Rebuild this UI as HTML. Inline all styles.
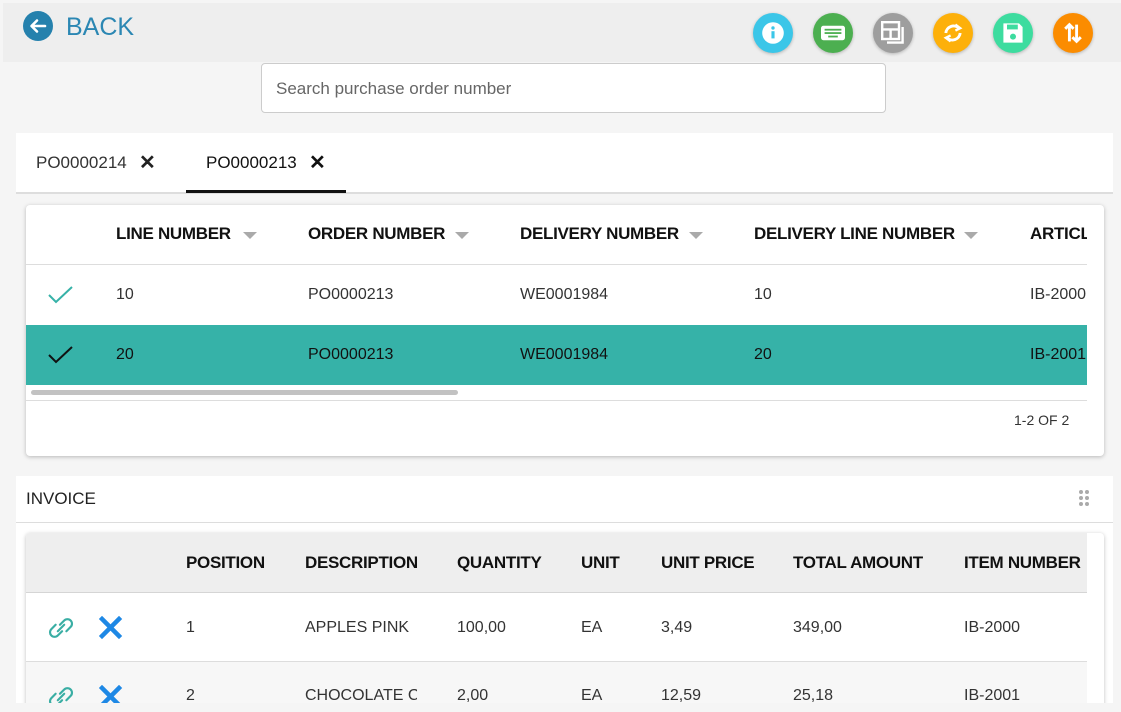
<!DOCTYPE html>
<html><head><meta charset="utf-8"><style>
*{margin:0;padding:0;box-sizing:border-box}
body{width:1121px;height:712px;overflow:hidden;background:#f5f5f5;font-family:"Liberation Sans",sans-serif;position:relative;color:#222}
.a{position:absolute;white-space:nowrap}
.hdr{left:3px;top:3px;width:1118px;height:59px;background:#eeeeee}
.ic{width:40px;height:40px;border-radius:50%;top:13px;box-shadow:0 1px 3px rgba(0,0,0,.25)}
.ic svg{position:absolute;left:8px;top:8px}
.th{font-weight:bold;font-size:17px;color:#111;letter-spacing:-0.3px}
.td{font-size:16px;color:#333}
.tri{display:inline-block;width:0;height:0;border-left:7px solid transparent;border-right:7px solid transparent;border-top:7px solid #aaa;position:absolute}
</style></head><body>
<div class="a hdr"></div>
<div class="a" style="left:23px;top:11px;width:30px;height:30px;border-radius:50%;background:#2581ad"></div>
<svg class="a" style="left:23px;top:11px" width="30" height="30" viewBox="0 0 30 30"><path d="M22 15H9M14 9.5L8.5 15 14 20.5" stroke="#fff" stroke-width="2.6" fill="none" stroke-linecap="round" stroke-linejoin="round"/></svg>
<div class="a" style="left:66px;top:13px;font-size:25px;color:#2b87b3">BACK</div>

<div class="a ic" style="left:753px;background:#3bc6e8"><svg width="24" height="24" viewBox="0 0 20 20"><circle cx="10" cy="10" r="9" fill="#fff"/><rect x="8.7" y="8.5" width="2.6" height="6" fill="#3bc6e8"/><circle cx="10" cy="5.8" r="1.4" fill="#3bc6e8"/></svg></div>
<div class="a ic" style="left:813px;background:#4caf50"><svg width="24" height="24" viewBox="0 0 20 20"><rect x="0" y="4" width="20" height="12" rx="2" fill="#fff"/><g fill="#4caf50"><rect x="3" y="6.5" width="14" height="1.5"/><rect x="3" y="9.3" width="14" height="1.5"/><rect x="6" y="12.2" width="8" height="1.5"/></g></svg></div>
<div class="a ic" style="left:873px;background:#9e9e9e"><svg width="24" height="24" viewBox="0 0 20 20" fill="none" stroke="#fff" stroke-width="2"><rect x="1" y="1" width="14" height="14"/><path d="M1 7h14M8 7v8M18 5v13H5"/></svg></div>
<div class="a ic" style="left:933px;background:#fdb00a"><svg width="24" height="24" viewBox="0 0 20 20" fill="none" stroke="#fff" stroke-width="2.4"><path d="M15 6A6.5 6.5 0 0 0 4 10M5 14a6.5 6.5 0 0 0 11-4"/><path d="M12 3l4 3-4 2M8 17l-4-3 4-2" stroke-width="2"/></svg></div>
<div class="a ic" style="left:993px;background:#3ddc9f"><svg width="24" height="24" viewBox="0 0 20 20"><path d="M2 2h13l3 3v13H2z" fill="#fff"/><rect x="5" y="3" width="9" height="4" fill="#3ddc9f"/><circle cx="10" cy="13" r="2.5" fill="#3ddc9f"/></svg></div>
<div class="a ic" style="left:1053px;background:#fb8c00"><svg width="24" height="24" viewBox="0 0 20 20" fill="none" stroke="#fff" stroke-width="2.4"><path d="M7 17V3M3.5 6.5L7 3l3.5 3.5M13 3v14M9.5 13.5L13 17l3.5-3.5"/></svg></div>

<div class="a" style="left:261px;top:63px;width:625px;height:50px;background:#fff;border:1px solid #ccc;border-radius:4px"></div>
<div class="a" style="left:276px;top:79px;font-size:17px;color:#666">Search purchase order number</div>

<div class="a" style="left:16px;top:133px;width:1097px;height:61px;background:#fff;border-bottom:2px solid #ddd"></div>
<div class="a" style="left:36px;top:153px;font-size:17px;color:#333">PO0000214</div>
<div class="a" style="left:139px;top:150px;font-size:20px;font-weight:bold;color:#222">✕</div>
<div class="a" style="left:206px;top:153px;font-size:17px;color:#111">PO0000213</div>
<div class="a" style="left:309px;top:150px;font-size:20px;font-weight:bold;color:#111">✕</div>
<div class="a" style="left:186px;top:190px;width:160px;height:3px;background:#111"></div>

<div class="a" style="left:26px;top:205px;width:1078px;height:251px;background:#fff;border-radius:4px;box-shadow:0 1px 4px rgba(0,0,0,.25);overflow:hidden">
  <div class="a" style="left:0;top:59px;width:1061px;height:1px;background:#ddd"></div>
  <div class="a" style="left:0;top:120px;width:1061px;height:60px;background:#36b2a8"></div>
  <div class="a" style="left:0;top:195px;width:1061px;height:1px;background:#ddd"></div>
  <div class="a" style="left:5px;top:185px;width:427px;height:5px;background:#c2c2c2;border-radius:3px"></div>
</div>
<div class="a th" style="left:116px;top:224px">LINE NUMBER</div><span class="tri" style="left:243px;top:232px"></span>
<div class="a th" style="left:308px;top:224px">ORDER NUMBER</div><span class="tri" style="left:455px;top:232px"></span>
<div class="a th" style="left:520px;top:224px">DELIVERY NUMBER</div><span class="tri" style="left:689px;top:232px"></span>
<div class="a th" style="left:754px;top:224px">DELIVERY LINE NUMBER</div><span class="tri" style="left:964px;top:232px"></span>
<div class="a th" style="left:1030px;top:224px;width:57px;overflow:hidden">ARTICLE</div>
<svg class="a" style="left:48px;top:285px" width="26" height="20" fill="none" stroke="#36b2a8" stroke-width="2"><path d="M1 10l7 7L24 2"/></svg>
<div class="a td" style="left:116px;top:286px">10</div>
<div class="a td" style="left:308px;top:286px">PO0000213</div>
<div class="a td" style="left:520px;top:286px">WE0001984</div>
<div class="a td" style="left:754px;top:286px">10</div>
<div class="a td" style="left:1030px;top:286px;width:57px;overflow:hidden">IB-2000</div>
<svg class="a" style="left:48px;top:345px" width="26" height="20" fill="none" stroke="#111" stroke-width="2"><path d="M1 10l7 7L24 2"/></svg>
<div class="a td" style="left:116px;top:346px;color:#111">20</div>
<div class="a td" style="left:308px;top:346px;color:#111">PO0000213</div>
<div class="a td" style="left:520px;top:346px;color:#111">WE0001984</div>
<div class="a td" style="left:754px;top:346px;color:#111">20</div>
<div class="a td" style="left:1030px;top:346px;width:57px;overflow:hidden;color:#111">IB-2001</div>
<div class="a" style="left:1014px;top:412px;font-size:14px;color:#333">1-2 OF 2</div>

<div class="a" style="left:16px;top:476px;width:1097px;height:236px;background:#fff"></div>
<div class="a" style="left:16px;top:522px;width:1097px;height:1px;background:#ddd"></div>
<div class="a" style="left:26px;top:489px;font-size:17px;color:#222">INVOICE</div>
<svg class="a" style="left:1078px;top:489px" width="12" height="18" fill="#aaa"><circle cx="3" cy="3" r="2"/><circle cx="9" cy="3" r="2"/><circle cx="3" cy="9" r="2"/><circle cx="9" cy="9" r="2"/><circle cx="3" cy="15" r="2"/><circle cx="9" cy="15" r="2"/></svg>

<div class="a" style="left:26px;top:533px;width:1078px;height:179px;background:#fff;border-radius:4px 4px 0 0;box-shadow:0 1px 4px rgba(0,0,0,.25);overflow:hidden">
  <div class="a" style="left:0;top:0;width:1061px;height:60px;background:#eeeeee;border-bottom:1px solid #d5d5d5"></div>
  <div class="a" style="left:0;top:128px;width:1061px;height:60px;background:#f7f7f7;border-top:1px solid #ddd"></div>
</div>
<div class="a th" style="left:186px;top:553px">POSITION</div>
<div class="a th" style="left:305px;top:553px">DESCRIPTION</div>
<div class="a th" style="left:457px;top:553px">QUANTITY</div>
<div class="a th" style="left:581px;top:553px">UNIT</div>
<div class="a th" style="left:661px;top:553px">UNIT PRICE</div>
<div class="a th" style="left:793px;top:553px">TOTAL AMOUNT</div>
<div class="a th" style="left:964px;top:553px">ITEM NUMBER</div>

<svg class="a" style="left:46px;top:613px" width="30" height="30" viewBox="0 0 28 28" fill="none" stroke="#3aaea4" stroke-width="2" stroke-linecap="round"><path d="M13 11l4-4a4 4 0 0 1 6 6l-4 4"/><path d="M15 17l-4 4a4 4 0 0 1-6-6l4-4"/><path d="M11 17l6-6"/></svg>
<svg class="a" style="left:99px;top:616px" width="24" height="24" stroke="#1e88e5" stroke-width="4.5" stroke-linecap="square"><path d="M3 3l17 17M20 3L3 20"/></svg>
<div class="a td" style="left:186px;top:619px">1</div>
<div class="a td" style="left:305px;top:619px;width:110px;overflow:hidden">APPLES PINK</div>
<div class="a td" style="left:457px;top:619px">100,00</div>
<div class="a td" style="left:581px;top:619px">EA</div>
<div class="a td" style="left:661px;top:619px">3,49</div>
<div class="a td" style="left:793px;top:619px">349,00</div>
<div class="a td" style="left:964px;top:619px">IB-2000</div>

<svg class="a" style="left:46px;top:682px" width="30" height="30" viewBox="0 0 28 28" fill="none" stroke="#3aaea4" stroke-width="2" stroke-linecap="round"><path d="M13 11l4-4a4 4 0 0 1 6 6l-4 4"/><path d="M15 17l-4 4a4 4 0 0 1-6-6l4-4"/><path d="M11 17l6-6"/></svg>
<svg class="a" style="left:99px;top:685px" width="24" height="24" stroke="#1e88e5" stroke-width="4.5" stroke-linecap="square"><path d="M3 3l17 17M20 3L3 20"/></svg>
<div class="a td" style="left:186px;top:687px">2</div>
<div class="a td" style="left:305px;top:687px;width:112px;overflow:hidden">CHOCOLATE CAKE</div>
<div class="a td" style="left:457px;top:687px">2,00</div>
<div class="a td" style="left:581px;top:687px">EA</div>
<div class="a td" style="left:661px;top:687px">12,59</div>
<div class="a td" style="left:793px;top:687px">25,18</div>
<div class="a td" style="left:964px;top:687px">IB-2001</div>
<div class="a" style="left:0;top:703px;width:1121px;height:9px;background:#f5f5f5"></div>
</body></html>
